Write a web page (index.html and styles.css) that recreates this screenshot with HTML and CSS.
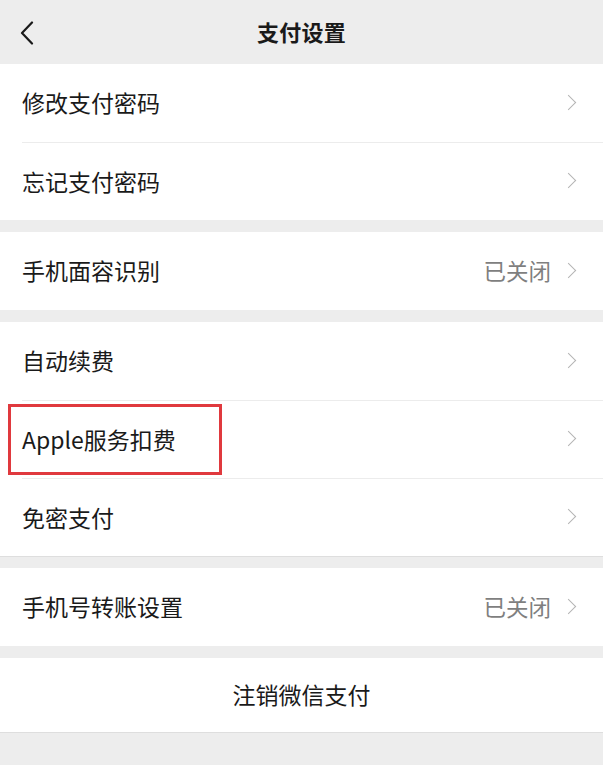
FILE: index.html
```html
<!DOCTYPE html>
<html lang="zh-CN">
<head>
  <meta charset="UTF-8">
  <meta name="viewport" content="width=device-width, initial-scale=1.0">
  <title>支付设置</title>
  <link rel="stylesheet" href="styles.css">
</head>
<body>
  <div class="nav">
    <span class="back">
      <svg width="14" height="24" viewBox="0 0 14 24"><path d="M12 1.5 L2 12 L12 22.5" fill="none" stroke="#1a1a1a" stroke-width="2.2" stroke-linecap="round" stroke-linejoin="round"/></svg>
    </span>
    <h1 class="title">支付设置</h1>
  </div>

  <div class="group">
    <div class="cell"><div class="cell-inner"><span class="label">修改支付密码</span><span class="arrow"></span></div></div>
    <div class="cell"><div class="cell-inner"><span class="label">忘记支付密码</span><span class="arrow"></span></div></div>
  </div>

  <div class="group">
    <div class="cell"><div class="cell-inner"><span class="label">手机面容识别</span><span class="value">已关闭</span><span class="arrow"></span></div></div>
  </div>

  <div class="group group-line">
    <div class="cell"><div class="cell-inner"><span class="label">自动续费</span><span class="arrow"></span></div></div>
    <div class="cell">
      <span class="mark"></span>
      <div class="cell-inner"><span class="label">Apple服务扣费</span><span class="arrow"></span></div>
    </div>
    <div class="cell"><div class="cell-inner"><span class="label">免密支付</span><span class="arrow"></span></div></div>
  </div>

  <div class="group">
    <div class="cell"><div class="cell-inner"><span class="label">手机号转账设置</span><span class="value">已关闭</span><span class="arrow"></span></div></div>
  </div>

  <div class="group group-line">
    <div class="button">注销微信支付</div>
  </div>
</body>
</html>
```

FILE: styles.css
```css
body {
  margin: 0;
  background: #ededed;
  font-family: "Noto Sans CJK SC", "Noto Sans", sans-serif;
  color: #1a1a1a;
}
.nav {
  position: relative;
  height: 64px;
  display: flex;
  align-items: center;
  justify-content: center;
}
.back {
  position: absolute;
  left: 20px;
  top: 21px;
  display: block;
  line-height: 0;
}
.title {
  margin: 0 0 2px 0;
  font-size: 22px;
  font-weight: 600;
  letter-spacing: 0.3px;
}
.group {
  background: #fff;
  margin-bottom: 12px;
}
.group-line {
  border-bottom: 1px solid #dedede;
  margin-bottom: 11px;
}
.cell {
  position: relative;
  padding-left: 22px;
}
.cell-inner {
  height: 78px;
  display: flex;
  align-items: center;
  padding-right: 27px;
  padding-bottom: 2px;
  box-sizing: border-box;
}
.cell + .cell .cell-inner {
  border-top: 1px solid #ececec;
}
.label {
  flex: 1;
  font-size: 23px;
}
.value {
  font-size: 22.5px;
  color: #7f7f7f;
  margin-right: 12px;
}
.arrow {
  width: 10px;
  height: 10px;
  border-top: 1.7px solid #b4b4b4;
  border-right: 1.7px solid #b4b4b4;
  transform: rotate(45deg);
  margin-right: 2px;
}
.mark {
  position: absolute;
  left: 8px;
  top: 4px;
  width: 214px;
  height: 71px;
  border: 3px solid #e0393e;
  box-sizing: border-box;
}
.button {
  height: 74px;
  display: flex;
  align-items: center;
  justify-content: center;
  padding-bottom: 2px;
  box-sizing: border-box;
  font-size: 23px;
}
```
